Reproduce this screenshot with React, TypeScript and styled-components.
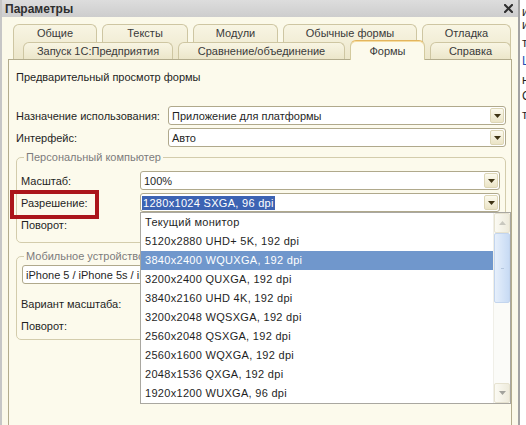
import React from "react";
import styled, { createGlobalStyle, css } from "styled-components";

const GlobalStyle = createGlobalStyle`
  html, body {
    margin: 0;
    padding: 0;
  }
  body {
    background: #ffffff;
    font-family: "Liberation Sans", Arial, sans-serif;
    font-size: 11px;
    color: #1f1f1f;
  }
  *, *::before, *::after {
    box-sizing: border-box;
  }
`;

const Screen = styled.div`
  display: flex;
  width: 526px;
  height: 425px;
  overflow: hidden;
`;

const Dialog = styled.div`
  flex: none;
  width: 520px;
  height: 425px;
  display: flex;
  flex-direction: column;
  background: #fbf9e9;
  border-left: 2px solid #c6c6c6;
  border-right: 2px solid #a3a3a3;
`;

const TitleBar = styled.div`
  flex: none;
  height: 17px;
  display: flex;
  align-items: center;
  justify-content: space-between;
  padding: 0 5px 0 3px;
  background: linear-gradient(#dddddd, #cdcdcd);
  font-size: 12px;
  font-weight: bold;
  color: #2e2e2e;
`;

const CloseIcon = styled.svg`
  width: 9px;
  height: 9px;
  display: block;
`;

const Body = styled.div`
  flex: 1;
  display: flex;
  flex-direction: column;
  padding: 7px 6px 0 6px;
`;

const TabStrip = styled.div`
  flex: none;
  height: 35px;
  display: flex;
  flex-direction: column;
  position: relative;
  z-index: 1;
`;

const TabRow = styled.div<{ $indent: number; $lower?: boolean }>`
  display: flex;
  align-items: flex-start;
  gap: 5px;
  padding-left: ${(p) => p.$indent}px;
  height: ${(p) => (p.$lower ? 17 : 35)}px;
  ${(p) =>
    p.$lower &&
    css`
      margin-top: -17px;
    `}
`;

const Tab = styled.div<{ $width: number; $tall?: boolean; $active?: boolean }>`
  flex: none;
  width: ${(p) => p.$width}px;
  height: ${(p) => (p.$tall ? 35 : 17)}px;
  line-height: 17px;
  text-align: center;
  white-space: nowrap;
  color: #3a3a3a;
  border: 1px solid #cec6a2;
  border-bottom: none;
  border-radius: 6px 6px 0 0;
  background: linear-gradient(#f8f5e3, #ece6ca);
  ${(p) =>
    p.$active &&
    css`
      margin-top: -2px;
      height: 20px;
      line-height: 20px;
      background: #fcfaec;
      border-color: #d3ca9e;
      border-top: 1px solid #e3b55e;
      box-shadow: inset 0 1px 0 #f5dca0;
    `}
`;

const Panel = styled.div`
  flex: 1;
  display: flex;
  flex-direction: column;
  background: #fcfaec;
  border: 1px solid #b3ac8d;
  border-bottom: none;
  padding: 10px 5px 0 7px;
`;

const Caption = styled.div`
  line-height: 14px;
  margin-bottom: 22px;
`;

const Rows = styled.div`
  display: flex;
  flex-direction: column;
  gap: 3px;
`;

const FormRow = styled.div<{ $after?: number }>`
  display: flex;
  align-items: center;
  height: 19px;
  margin-bottom: ${(p) => p.$after ?? 0}px;
`;

const Label = styled.div<{ $width: number; $marked?: boolean }>`
  flex: none;
  width: ${(p) => p.$width}px;
  line-height: 14px;
  white-space: nowrap;
  position: relative;
  ${(p) =>
    p.$marked &&
    css`
      &::after {
        content: "";
        position: absolute;
        left: -11px;
        top: -6px;
        width: 89px;
        height: 29px;
        border: 4px solid #ab151b;
      }
    `}
`;

const Combo = styled.div<{ $indent?: number }>`
  position: relative;
  flex: 1;
  height: 19px;
  margin-left: ${(p) => p.$indent ?? 0}px;
  display: flex;
  align-items: center;
  background: #ffffff;
  border: 1px solid #b0a98c;
  border-radius: 3px;
`;

const ComboValue = styled.div`
  flex: 1;
  min-width: 0;
  padding-left: 3px;
  line-height: 14px;
  white-space: nowrap;
  overflow: hidden;
`;

const Selection = styled.span`
  display: inline-block;
  margin-left: -2px;
  padding: 0 1px;
  letter-spacing: 0.3px;
  background: #3c63b3;
  color: #ffffff;
`;

const DropButton = styled.div`
  flex: none;
  width: 14px;
  height: 15px;
  margin-right: 1px;
  display: flex;
  align-items: center;
  justify-content: center;
  border: 1px solid #ddd6b6;
  border-radius: 2px;
  background: linear-gradient(#fcfaee, #ebe4c6);
`;

const Group = styled.fieldset<{ $top: number; $pad: string }>`
  margin: ${(p) => p.$top}px 0 0 0;
  padding: ${(p) => p.$pad};
  min-width: 0;
  border: 1px solid #d3ccac;
  border-radius: 5px;
`;

const GroupTitle = styled.legend`
  margin-left: 3px;
  padding: 0 2px;
  line-height: 14px;
  color: #7c7c7c;
`;

const DropList = styled.div`
  position: absolute;
  left: -1px;
  top: calc(100% + 1px);
  width: 371px;
  height: 192px;
  z-index: 5;
  display: flex;
  background: #ffffff;
  border: 1px solid #a9a7a0;
`;

const Items = styled.div`
  flex: 1;
  display: flex;
  flex-direction: column;
`;

const Item = styled.div<{ $hot?: boolean }>`
  height: 19px;
  line-height: 19px;
  padding-left: 4px;
  letter-spacing: 0.3px;
  white-space: nowrap;
  color: #1f1f1f;
  ${(p) =>
    p.$hot &&
    css`
      background: #7097cc;
      color: #ffffff;
    `}
`;

const ScrollBar = styled.div`
  flex: none;
  width: 17px;
  display: flex;
  flex-direction: column;
  background: #fbfbf8;
  border-left: 1px solid #f0efe8;
`;

const ScrollButton = styled.div`
  flex: none;
  height: 20px;
  display: flex;
  align-items: center;
  justify-content: center;
  background: linear-gradient(to right, #fbfaf3, #eeebdc);
  border: 1px solid #e6e2d0;
  border-radius: 2px;
`;

const Thumb = styled.div`
  flex: none;
  height: 70px;
  display: flex;
  align-items: center;
  justify-content: center;
  background: linear-gradient(to right, #e6effb, #c8dbf4);
  border: 1px solid #c3d5ee;
  border-radius: 2px;
`;

const Grip = styled.div`
  width: 3px;
  height: 1px;
  background: #b4c6de;
`;

const Track = styled.div`
  flex: 1;
`;

const BackPane = styled.div`
  flex: 1;
  background: #ffffff;
  padding: 5px 0 0 2px;
  overflow: hidden;
  font-size: 12px;
`;

const BackLine = styled.div<{ $gap: number; $blue?: boolean }>`
  margin-top: ${(p) => p.$gap}px;
  line-height: 14px;
  white-space: nowrap;
  color: ${(p) => (p.$blue ? "#2250b4" : "#1f1f1f")};
`;

const Arrow = ({ up, color }: { up?: boolean; color: string }) => (
  <svg width="7" height="4" viewBox="0 0 7 4" style={{ display: "block" }}>
    <polygon points={up ? "0,4 7,4 3.5,0" : "0,0 7,0 3.5,4"} fill={color} />
  </svg>
);

const ComboBox = ({
  value,
  selected,
  indent,
  children,
}: {
  value: string;
  selected?: boolean;
  indent?: number;
  children?: React.ReactNode;
}) => (
  <Combo $indent={indent}>
    <ComboValue>{selected ? <Selection>{value}</Selection> : value}</ComboValue>
    <DropButton>
      <Arrow color="#3f3414" />
    </DropButton>
    {children}
  </Combo>
);

const topTabs = [
  { title: "Общие", width: 84 },
  { title: "Тексты", width: 86 },
  { title: "Модули", width: 85 },
  { title: "Обычные формы", width: 134 },
  { title: "Отладка", width: 89 },
];

const frontTabs = [
  { title: "Запуск 1С:Предприятия", width: 150 },
  { title: "Сравнение/объединение", width: 167 },
  { title: "Формы", width: 75, active: true },
  { title: "Справка", width: 81 },
];

const resolutions = [
  "Текущий монитор",
  "5120x2880 UHD+ 5K, 192 dpi",
  "3840x2400 WQUXGA, 192 dpi",
  "3200x2400 QUXGA, 192 dpi",
  "3840x2160 UHD 4K, 192 dpi",
  "3200x2048 WQSXGA, 192 dpi",
  "2560x2048 QSXGA, 192 dpi",
  "2560x1600 WQXGA, 192 dpi",
  "2048x1536 QXGA, 192 dpi",
  "1920x1200 WUXGA, 96 dpi",
];

const backLines = [
  { text: "из", gap: 0 },
  { text: "им", gap: -1 },
  { text: "те", gap: 4 },
  { text: "Ця", gap: 4, blue: true },
  { text: "на", gap: 5 },
  { text: "Со", gap: 2 },
  { text: "те", gap: 5 },
];

export default function App() {
  return (
    <>
      <GlobalStyle />
      <Screen>
        <Dialog>
          <TitleBar>
            <span>Параметры</span>
            <CloseIcon viewBox="0 0 9 9">
              <path d="M1 1 L8 8 M8 1 L1 8" stroke="#2f2f2f" strokeWidth="2.1" strokeLinecap="square" />
            </CloseIcon>
          </TitleBar>
          <Body>
            <TabStrip>
              <TabRow $indent={5}>
                {topTabs.map((t) => (
                  <Tab key={t.title} $width={t.width} $tall>
                    {t.title}
                  </Tab>
                ))}
              </TabRow>
              <TabRow $indent={15} $lower>
                {frontTabs.map((t) => (
                  <Tab key={t.title} $width={t.width} $active={t.active}>
                    {t.title}
                  </Tab>
                ))}
              </TabRow>
            </TabStrip>
            <Panel>
              <Caption>Предварительный просмотр формы</Caption>
              <Rows>
                <FormRow>
                  <Label $width={152}>Назначение использования:</Label>
                  <ComboBox value="Приложение для платформы" />
                </FormRow>
                <FormRow>
                  <Label $width={152}>Интерфейс:</Label>
                  <ComboBox value="Авто" />
                </FormRow>
              </Rows>
              <Group $top={3} $pad="7px 5px 8px 4px">
                <GroupTitle>Персональный компьютер</GroupTitle>
                <Rows>
                  <FormRow>
                    <Label $width={119}>Масштаб:</Label>
                    <ComboBox value="100%" />
                  </FormRow>
                  <FormRow>
                    <Label $width={119} $marked>
                      Разрешение:
                    </Label>
                    <ComboBox value="1280x1024 SXGA, 96 dpi" selected>
                      <DropList>
                        <Items>
                          {resolutions.map((r, i) => (
                            <Item key={r} $hot={i === 2}>
                              {r}
                            </Item>
                          ))}
                        </Items>
                        <ScrollBar>
                          <ScrollButton>
                            <Arrow up color="#c9c8bf" />
                          </ScrollButton>
                          <Thumb>
                            <Grip />
                          </Thumb>
                          <Track />
                          <ScrollButton>
                            <Arrow color="#a2a29c" />
                          </ScrollButton>
                        </ScrollBar>
                      </DropList>
                    </ComboBox>
                  </FormRow>
                  <FormRow>
                    <Label $width={119}>Поворот:</Label>
                    <ComboBox value="" />
                  </FormRow>
                </Rows>
              </Group>
              <Group $top={6} $pad="2px 5px 4px 4px">
                <GroupTitle>Мобильное устройство</GroupTitle>
                <Rows>
                  <FormRow $after={7}>
                    <ComboBox value="iPhone 5 / iPhone 5s / iPhone SE" indent={1} />
                  </FormRow>
                  <FormRow>
                    <Label $width={119}>Вариант масштаба:</Label>
                    <ComboBox value="" />
                  </FormRow>
                  <FormRow>
                    <Label $width={119}>Поворот:</Label>
                    <ComboBox value="" />
                  </FormRow>
                </Rows>
              </Group>
            </Panel>
          </Body>
        </Dialog>
        <BackPane>
          {backLines.map((l, i) => (
            <BackLine key={i} $gap={l.gap} $blue={l.blue}>
              {l.text}
            </BackLine>
          ))}
        </BackPane>
      </Screen>
    </>
  );
}
